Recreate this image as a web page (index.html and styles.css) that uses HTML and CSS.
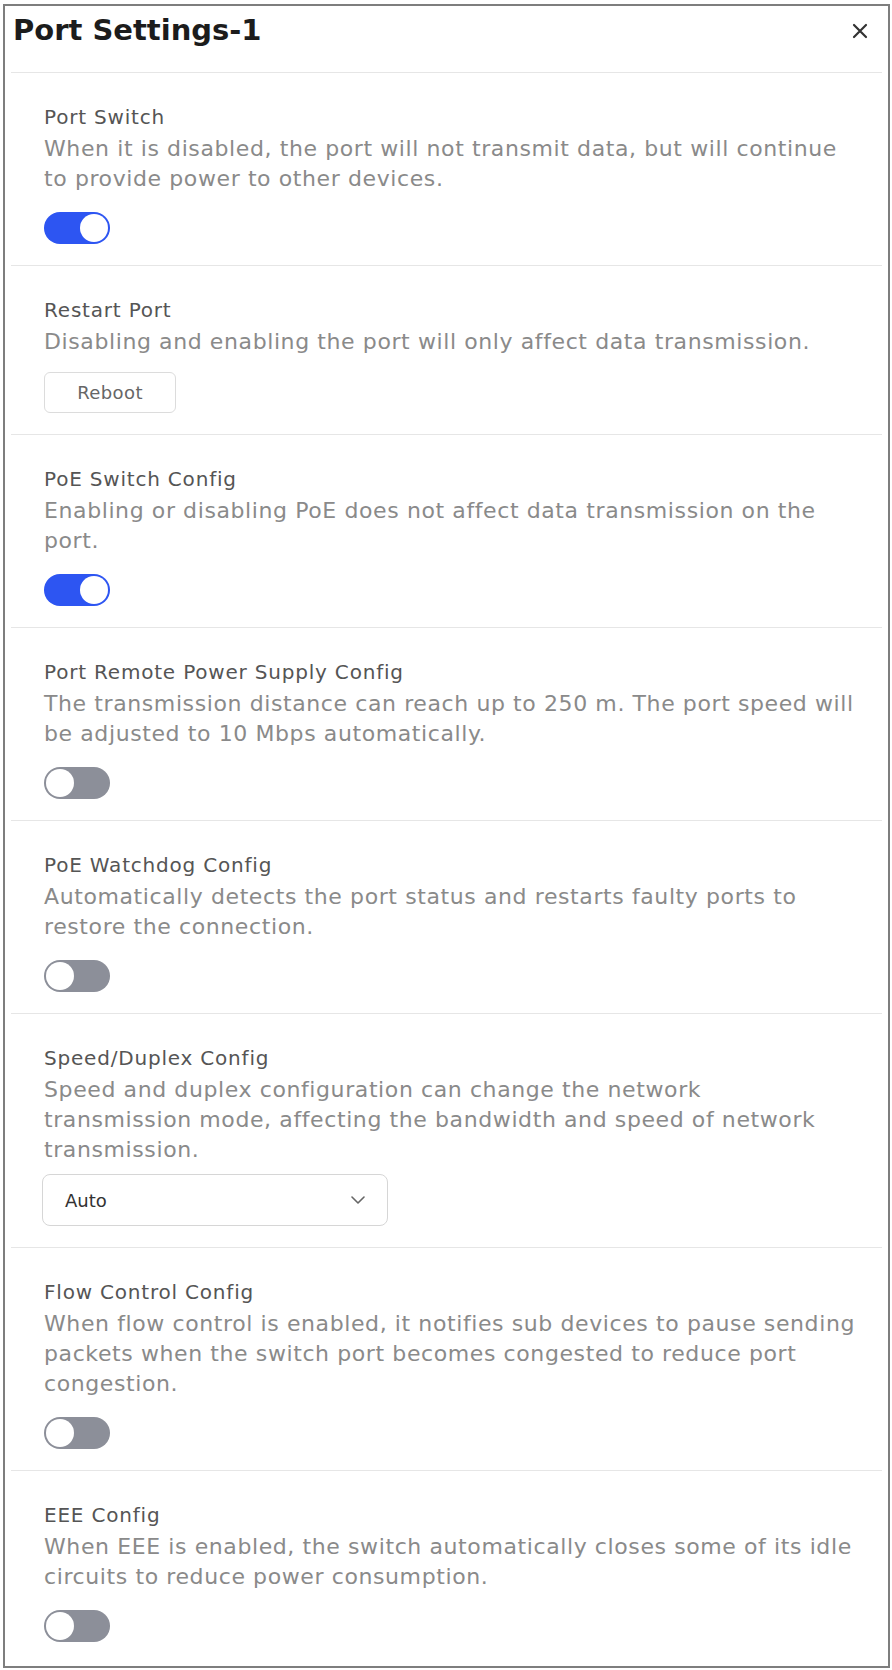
FILE: index.html
```html
<!DOCTYPE html>
<html lang="en">
<head>
<meta charset="utf-8">
<title>Port Settings-1</title>
<link rel="stylesheet" href="styles.css">
</head>
<body>
<div class="dialog">
  <header class="dialog-header">
    <h1 class="dialog-title">Port Settings-1</h1>
    <button class="close-btn" aria-label="Close">
      <svg width="16" height="16" viewBox="0 0 16 16"><path d="M2 2 L14 14 M14 2 L2 14" stroke="#333" stroke-width="2.2" stroke-linecap="round"/></svg>
    </button>
  </header>

  <section class="setting">
    <div class="setting-label">Port Switch</div>
    <p class="setting-desc">When it is disabled, the port will not transmit data, but will continue<br>to provide power to other devices.</p>
    <span class="toggle on"></span>
  </section>

  <section class="setting">
    <div class="setting-label">Restart Port</div>
    <p class="setting-desc">Disabling and enabling the port will only affect data transmission.</p>
    <button class="btn">Reboot</button>
  </section>

  <section class="setting">
    <div class="setting-label">PoE Switch Config</div>
    <p class="setting-desc">Enabling or disabling PoE does not affect data transmission on the<br>port.</p>
    <span class="toggle on"></span>
  </section>

  <section class="setting">
    <div class="setting-label">Port Remote Power Supply Config</div>
    <p class="setting-desc">The transmission distance can reach up to 250 m. The port speed will<br>be adjusted to 10 Mbps automatically.</p>
    <span class="toggle"></span>
  </section>

  <section class="setting">
    <div class="setting-label">PoE Watchdog Config</div>
    <p class="setting-desc">Automatically detects the port status and restarts faulty ports to<br>restore the connection.</p>
    <span class="toggle"></span>
  </section>

  <section class="setting">
    <div class="setting-label">Speed/Duplex Config</div>
    <p class="setting-desc">Speed and duplex configuration can change the network<br>transmission mode, affecting the bandwidth and speed of network<br>transmission.</p>
    <div class="select">
      <span>Auto</span>
      <svg width="14" height="8" viewBox="0 0 14 8"><path d="M1 1 L7 7 L13 1" fill="none" stroke="#666" stroke-width="1.6" stroke-linecap="round" stroke-linejoin="round"/></svg>
    </div>
  </section>

  <section class="setting">
    <div class="setting-label">Flow Control Config</div>
    <p class="setting-desc">When flow control is enabled, it notifies sub devices to pause sending<br>packets when the switch port becomes congested to reduce port<br>congestion.</p>
    <span class="toggle"></span>
  </section>

  <section class="setting last">
    <div class="setting-label">EEE Config</div>
    <p class="setting-desc">When EEE is enabled, the switch automatically closes some of its idle<br>circuits to reduce power consumption.</p>
    <span class="toggle"></span>
  </section>
</div>
</body>
</html>
```

FILE: styles.css
```css
* {
  box-sizing: border-box;
}

body {
  margin: 0;
  background: #fff;
  font-family: "DejaVu Sans", "Open Sans", "Liberation Sans", sans-serif;
}

.dialog {
  margin: 4px 2px 2px 3px;
  height: 1664px;
  border: 2px solid #7e7e7e;
  background: #fff;
}

.dialog-header {
  display: flex;
  justify-content: space-between;
  align-items: flex-start;
  margin: 0 6px;
  padding: 6px 14px 0 2px;
  height: 67px;
  border-bottom: 1px solid #e6e6e6;
}

.dialog-title {
  margin: 0;
  font-size: 29px;
  line-height: 36px;
  font-weight: 700;
  color: #1c1c1c;
}

.close-btn {
  border: 0;
  background: none;
  padding: 0;
  margin-top: 11px;
  width: 16px;
  height: 16px;
  display: flex;
}

.setting {
  margin: 0 6px;
  padding: 31px 20px 21px 33px;
  border-bottom: 1px solid #e6e6e6;
  display: flex;
  flex-direction: column;
  align-items: flex-start;
}

.setting.last {
  border-bottom: 0;
}

.setting-label {
  font-size: 20px;
  line-height: 26px;
  letter-spacing: 0.8px;
  color: #555;
}

.setting-desc {
  margin: 4px 0 0;
  font-size: 22px;
  line-height: 30px;
  color: #8a8a8a;
  letter-spacing: 0.6px;
  white-space: nowrap;
}

.toggle {
  margin-top: 18px;
  width: 66px;
  height: 32px;
  border-radius: 16px;
  background: #8c8f99;
  display: flex;
  align-items: center;
  padding: 0 2px;
}

.toggle::after {
  content: "";
  width: 28px;
  height: 28px;
  border-radius: 50%;
  background: #fff;
}

.toggle.on {
  background: #2d55f2;
  justify-content: flex-end;
}

.btn {
  margin-top: 15px;
  width: 132px;
  height: 41px;
  border: 1px solid #dcdcdc;
  border-radius: 6px;
  background: #fff;
  font-family: inherit;
  font-size: 18px;
  letter-spacing: 0.4px;
  color: #666;
}

.select {
  margin-top: 9px;
  margin-left: -2px;
  width: 346px;
  height: 52px;
  border: 1px solid #d6d6d6;
  border-radius: 8px;
  display: flex;
  align-items: center;
  justify-content: space-between;
  padding: 0 22px 0 22px;
  font-size: 18px;
  color: #333;
}
```
